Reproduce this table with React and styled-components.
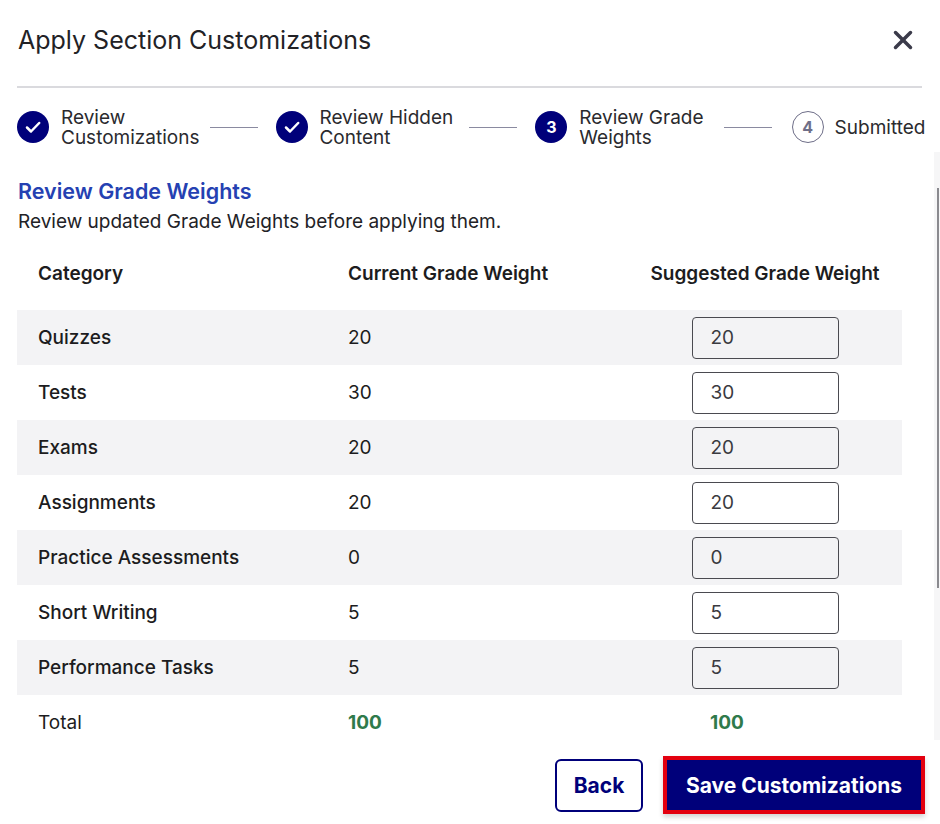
import { Fragment } from 'react';
import styled, { createGlobalStyle } from 'styled-components';
import { X } from 'lucide-react';

const GlobalStyle = createGlobalStyle`
    body {
        margin: 0;
        background: #ffffff;
        font-family: Inter, "Noto Sans", sans-serif;
        color: #1f1f24;
    }
`

const navy = '#00007a';

const Modal = styled.div`
    position: relative;
    width: 940px;
    height: 824px;
    box-sizing: border-box;
    padding: 0 15px 0 17px;
    display: flex;
    flex-direction: column;
    background: #fff;
    overflow: hidden;
`

const Header = styled.div`
    display: flex;
    align-items: center;
    justify-content: space-between;
    height: 88px;
    padding: 0 0 6px 1px;
    box-sizing: border-box;
    border-bottom: 2px solid #dadade;
    margin-right: 3px;
`

const Title = styled.h1`
    margin: 0;
    font-size: 25px;
    font-weight: 400;
    color: #222226;
`

const CloseButton = styled.button`
    display: flex;
    align-items: center;
    justify-content: center;
    background: unset;
    border: unset;
    padding: 0;
    margin-right: 4px;
    color: #3b3b4a;
`

const Stepper = styled.div`
    display: flex;
    align-items: center;
    margin-top: 23px;
    height: 32px;
`

const Step = styled.div`
    display: flex;
    align-items: center;
    gap: ${props => props.$gap || 12}px;
`

const StepCircle = styled.div`
    width: 32px;
    height: 32px;
    flex: none;
    box-sizing: border-box;
    border-radius: 50%;
    display: flex;
    align-items: center;
    justify-content: center;
    font-size: 16px;
    font-weight: 700;
    background: ${props => props.$pending ? '#fff' : navy};
    border: ${props => props.$pending ? '1px solid #6e6e88' : 'none'};
    color: ${props => props.$pending ? '#6e6e88' : '#fff'};
`

const StepLabel = styled.div`
    font-size: 19px;
    line-height: 20px;
    margin-top: 1px;
    color: #2a2a2e;
    white-space: nowrap;
`

const Connector = styled.div`
    width: 48px;
    height: 1px;
    flex: none;
    background: #8a8aa0;
    margin: 0 ${props => props.$right}px 0 ${props => props.$left}px;
`

const SectionTitle = styled.h2`
    margin: 36px 0 0 1px;
    font-size: 21.5px;
    line-height: 24px;
    font-weight: 600;
    color: #2541b2;
`

const SectionText = styled.p`
    margin: 7px 0 0 1px;
    font-size: 19px;
    line-height: 24px;
    color: #222226;
`

const Table = styled.div`
    width: 885px;
    margin-top: 12px;
    display: flex;
    flex-direction: column;
`

const Row = styled.div`
    display: grid;
    grid-template-columns: 310px 300px 1fr;
    align-items: center;
    height: 55px;
    background: ${props => props.$shaded ? '#f3f3f5' : 'transparent'};
    font-size: 19px;
    font-weight: ${props => props.$head ? 600 : 500};
    color: #1c1c20;
`

const HeadRow = styled(Row)`
    height: 64px;
    align-items: start;
    padding-top: 16px;
    box-sizing: border-box;
`

const Cell = styled.div`
    padding-left: 21px;
    font-weight: ${props => props.$plain ? 400 : 'inherit'};
`

const CenterCell = styled.div`
    display: flex;
    justify-content: ${props => props.$start ? 'flex-start' : 'center'};
    padding-left: ${props => props.$start ? 83 : 1}px;
`

const TotalValue = styled.span`
    color: #2f7a4b;
    font-weight: 700;
`

const WeightInput = styled.input`
    width: 147px;
    height: 42px;
    box-sizing: border-box;
    border: 1px solid #4a4a50;
    border-radius: 4px;
    padding: 0 18px;
    font-family: inherit;
    font-size: 19px;
    color: #3a3a40;
    background: ${props => props.$shaded ? '#f3f3f5' : '#fff'};
`

const Footer = styled.div`
    display: flex;
    justify-content: flex-end;
    align-items: center;
    gap: 20px;
    margin-top: 6px;
`

const BackButton = styled.button`
    width: 88px;
    height: 53px;
    border: 2px solid ${navy};
    border-radius: 6px;
    background: #fff;
    color: ${navy};
    font-family: inherit;
    font-size: 21px;
    font-weight: 700;
`

const SaveButton = styled.button`
    width: 262px;
    height: 58px;
    border: 4px solid #e3000f;
    background: ${navy};
    color: #fff;
    font-family: inherit;
    font-size: 21px;
    font-weight: 700;
    box-shadow: 0 3px 5px rgba(0, 0, 0, 0.18);
`

const ScrollTrack = styled.div`
    position: absolute;
    right: 0;
    top: 152px;
    width: 6px;
    height: 588px;
    background: #f6f6f7;
    &::after {
        content: '';
        position: absolute;
        left: 3px;
        top: 36px;
        width: 2px;
        height: 400px;
        background: #8a8a8f;
    }
`

const steps = [
    { label: ['Review', 'Customizations'], done: true, gap: 12 },
    { label: ['Review Hidden', 'Content'], done: true, gap: 11 },
    { label: ['Review Grade', 'Weights'], num: 3, gap: 12 },
    { label: ['Submitted'], num: 4, pending: true, gap: 11 },
];

// space left and right of each connector line
const connectorGaps = [[11, 18], [16, 18], [20, 20]];

const rows = [
    { name: 'Quizzes', current: 20, suggested: 20 },
    { name: 'Tests', current: 30, suggested: 30 },
    { name: 'Exams', current: 20, suggested: 20 },
    { name: 'Assignments', current: 20, suggested: 20 },
    { name: 'Practice Assessments', current: 0, suggested: 0 },
    { name: 'Short Writing', current: 5, suggested: 5 },
    { name: 'Performance Tasks', current: 5, suggested: 5 },
];

function CheckMark() {
    return (
        <svg width="20" height="20" viewBox="0 0 20 20" fill="none">
            <path d="M4 10.5l4 4L16.2 6" stroke="#fff" strokeWidth="2.5" strokeLinecap="round" strokeLinejoin="round" />
        </svg>
    )
}

export default function App() {
    return (
        <>
            <GlobalStyle />
            <Modal>
                <Header>
                    <Title>Apply Section Customizations</Title>
                    <CloseButton aria-label="Close">
                        <X size={30} strokeWidth={2.8} />
                    </CloseButton>
                </Header>

                <Stepper>
                    {steps.map((step, i) => (
                        <Fragment key={i}>
                            <Step $gap={step.gap}>
                                <StepCircle $pending={step.pending}>
                                    {step.done ? <CheckMark /> : step.num}
                                </StepCircle>
                                <StepLabel>
                                    {step.label.map((line, j) => (
                                        <Fragment key={j}>{j > 0 && <br />}{line}</Fragment>
                                    ))}
                                </StepLabel>
                            </Step>
                            {i < connectorGaps.length && (
                                <Connector $left={connectorGaps[i][0]} $right={connectorGaps[i][1]} />
                            )}
                        </Fragment>
                    ))}
                </Stepper>

                <SectionTitle>Review Grade Weights</SectionTitle>
                <SectionText>Review updated Grade Weights before applying them.</SectionText>

                <Table>
                    <HeadRow $head>
                        <Cell>Category</Cell>
                        <Cell>Current Grade Weight</Cell>
                        <CenterCell>Suggested Grade Weight</CenterCell>
                    </HeadRow>
                    {rows.map((row, i) => (
                        <Row key={row.name} $shaded={i % 2 === 0}>
                            <Cell>{row.name}</Cell>
                            <Cell $plain>{row.current}</Cell>
                            <CenterCell>
                                <WeightInput $shaded={i % 2 === 0} defaultValue={row.suggested} />
                            </CenterCell>
                        </Row>
                    ))}
                    <Row>
                        <Cell $plain>Total</Cell>
                        <Cell><TotalValue>100</TotalValue></Cell>
                        <CenterCell $start>
                            <TotalValue>100</TotalValue>
                        </CenterCell>
                    </Row>
                </Table>

                <Footer>
                    <BackButton>Back</BackButton>
                    <SaveButton>Save Customizations</SaveButton>
                </Footer>

                <ScrollTrack />
            </Modal>
        </>
    )
}
